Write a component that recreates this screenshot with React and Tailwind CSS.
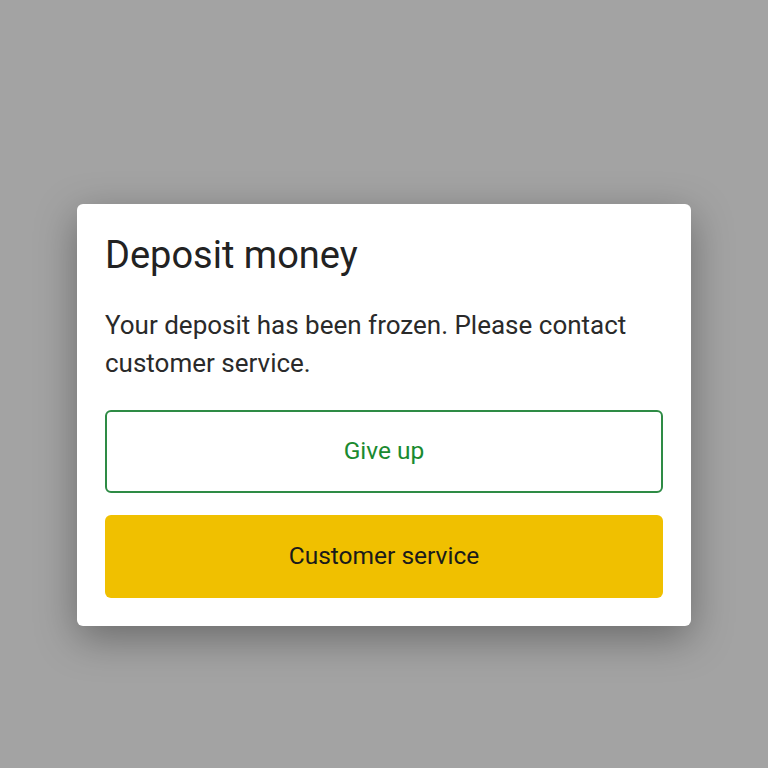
export default function App() {
  return (
    <div className="w-[768px] h-[768px] bg-[#a3a3a3] flex items-start justify-center pt-[204px]" style={{ fontFamily: "Roboto, 'Noto Sans', sans-serif" }}>
      <div className="w-[614px] bg-white rounded-[6px] shadow-[0_12px_40px_rgba(0,0,0,0.35)] px-[28px] pt-[28px] pb-[28px] flex flex-col">
        <h1 className="text-[38px] leading-[46px] text-[#222222] font-normal">Deposit money</h1>
        <p className="mt-[28px] text-[26px] leading-[38px] text-[#2a2a2a]">
          Your deposit has been frozen. Please contact customer service.
        </p>
        <button className="mt-[28px] h-[83px] w-full rounded-[6px] border-2 border-[#2e8b45] bg-white text-[24.5px] text-[#1a8a30]">
          Give up
        </button>
        <button className="mt-[22px] h-[83px] w-full rounded-[6px] bg-[#f0c000] text-[24.5px] text-[#1a1a1a]">
          Customer service
        </button>
      </div>
    </div>
  );
}
